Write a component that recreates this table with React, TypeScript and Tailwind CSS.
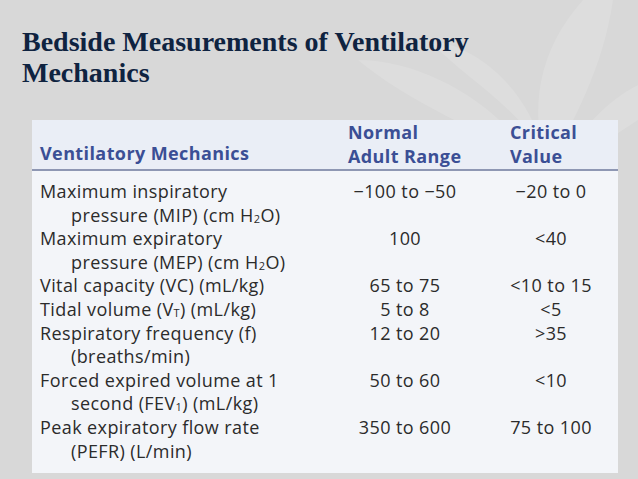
import React from 'react';

type Row = {
  label: React.ReactNode;
  normal: string;
  critical: string;
};

const sub = (s: string) => <sub className="text-[11px] relative top-[1px] align-baseline">{s}</sub>;

const rows: Row[] = [
  {
    label: (
      <>
        Maximum inspiratory
        <br />
        <span className="pl-[31px]">pressure (MIP) (cm H{sub('2')}O)</span>
      </>
    ),
    normal: '\u2212100 to \u221250',
    critical: '\u221220 to 0',
  },
  {
    label: (
      <>
        Maximum expiratory
        <br />
        <span className="pl-[31px]">pressure (MEP) (cm H{sub('2')}O)</span>
      </>
    ),
    normal: '100',
    critical: '<40',
  },
  { label: 'Vital capacity (VC) (mL/kg)', normal: '65 to 75', critical: '<10 to 15' },
  { label: <>Tidal volume (V{sub('T')}) (mL/kg)</>, normal: '5 to 8', critical: '<5' },
  {
    label: (
      <>
        Respiratory frequency (f)
        <br />
        <span className="pl-[31px]">(breaths/min)</span>
      </>
    ),
    normal: '12 to 20',
    critical: '>35',
  },
  {
    label: (
      <>
        Forced expired volume at 1
        <br />
        <span className="pl-[31px]">second (FEV{sub('1')}) (mL/kg)</span>
      </>
    ),
    normal: '50 to 60',
    critical: '<10',
  },
  {
    label: (
      <>
        Peak expiratory flow rate
        <br />
        <span className="pl-[31px]">(PEFR) (L/min)</span>
      </>
    ),
    normal: '350 to 600',
    critical: '75 to 100',
  },
];

// faint leaf watermark in the top right of the slide
const Leaves = () => (
  <svg className="absolute right-0 top-0 pointer-events-none" width="300" height="170" viewBox="0 0 300 170">
    <g fill="#ffffff" opacity="0.13">
      <path d="M200 170 C 150 130, 80 110, 20 60 C 90 60, 170 110, 200 170 Z" />
      <path d="M210 170 C 190 110, 200 50, 245 0 L 275 0 C 265 70, 235 120, 210 170 Z" />
      <path d="M220 170 C 240 130, 270 100, 300 85 L 300 120 C 270 140, 245 155, 220 170 Z" />
      <path d="M205 150 C 170 100, 130 80, 90 40 C 140 45, 190 90, 205 150 Z" />
    </g>
  </svg>
);

export default function App() {
  return (
    <div className="relative w-[638px] h-[479px] overflow-hidden bg-[#d8d8d8]">
      <Leaves />
      <div className="relative pt-[26px] pl-[22px]">
        <h1 className="font-['Liberation_Serif',serif] font-bold text-[28px] leading-[31px] text-[#0f2340]">
          Bedside Measurements of Ventilatory
          <br />
          Mechanics
        </h1>
      </div>

      <div className="relative ml-[32px] mt-[32px] w-[586px] h-[353px] bg-[#f3f5f9] font-['Open_Sans',sans-serif] text-[18px] tracking-[0.4px] leading-[23.6px] text-[#2b2b2b]">
        <div className="grid grid-cols-[308px_130px_148px] bg-[#eaeef6] border-b-2 border-[#8e97b3] h-[51px] text-[#3b4f95] font-bold">
          <div className="pl-[8px] flex items-end pb-[3px] whitespace-nowrap">Ventilatory Mechanics</div>
          <div className="px-2 pt-[1px] whitespace-nowrap">
            Normal
            <br />
            Adult Range
          </div>
          <div className="pl-[40px] pt-[1px]">
            Critical
            <br />
            Value
          </div>
        </div>
        <div className="pt-[9px]">
          {rows.map((r, i) => (
            <div key={i} className="grid grid-cols-[308px_130px_148px]">
              <div className="pl-[8px] whitespace-nowrap">{r.label}</div>
              <div className="px-1 text-center whitespace-nowrap">{r.normal}</div>
              <div className="pl-[40px] pr-[26px] text-center whitespace-nowrap">{r.critical}</div>
            </div>
          ))}
        </div>
      </div>
    </div>
  );
}
